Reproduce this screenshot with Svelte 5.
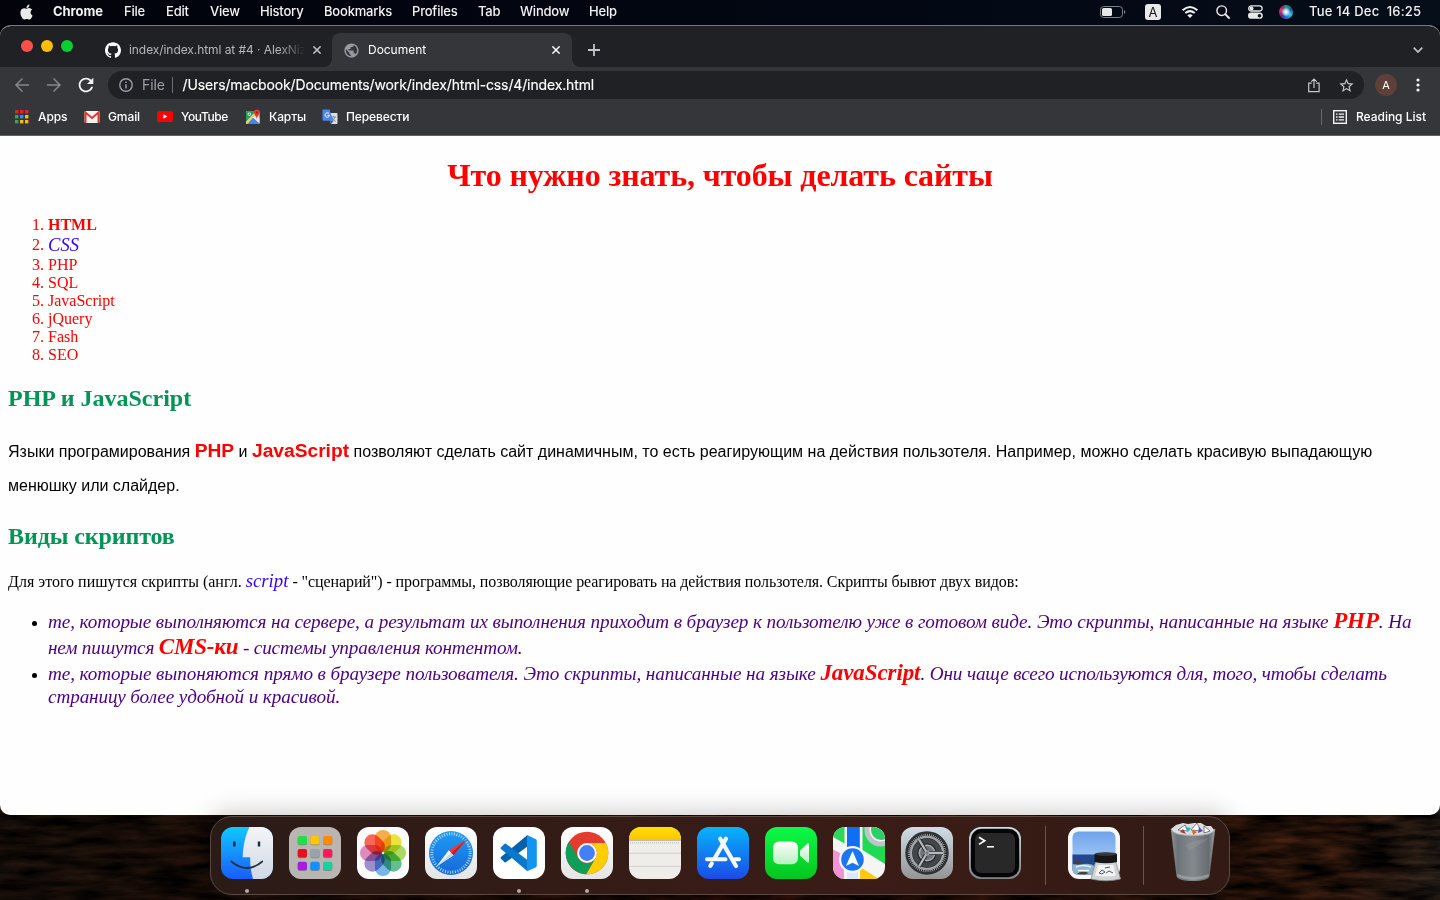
<script>
  const menus = [
    ['File', 42], ['Edit', 44], ['View', 50], ['History', 64], ['Bookmarks', 88],
    ['Profiles', 66], ['Tab', 42], ['Window', 69], ['Help', 40]
  ];
  const pads = [
    ['#20e04a', 8.7, 9], ['#ffc60a', 21.3, 9], ['#ff8a0a', 34, 9],
    ['#e8101c', 8.7, 22], ['#98a4ad', 21.3, 22], ['#fb1a5b', 34, 22],
    ['#a81be0', 8.7, 34.7], ['#1190ff', 21.3, 34.7], ['#1dcf9c', 34, 34.7]
  ];
  const petals = ['#fb9310', '#e6dc00', '#93d02c', '#2fae68', '#4a9fe4', '#7c6cc0', '#d566a8', '#f83420'];
  const dots = ['#f21d1d', '#f21d1d', '#f21d1d', '#34a853', '#4285f4', '#fbbc04', '#34a853', '#fbbc04', '#fbbc04'];
</script>

<div class="desktop">
  <svg class="wallpaper" width="1440" height="900" aria-hidden="true">
    <defs>
      <filter id="grain" x="0" y="0" width="100%" height="100%">
        <feTurbulence type="fractalNoise" baseFrequency="0.02 0.11" numOctaves="6" seed="8" />
        <feColorMatrix values="0 0 0 0 0  0 0 0 0 0  0 0 0 0 0  1.4 0 0 0 -0.1" />
      </filter>
      <linearGradient id="wood"><stop offset="0" stop-color="#2a1a10" /><stop offset=".5" stop-color="#42160b" /><stop offset=".93" stop-color="#4a2412" /><stop offset="1" stop-color="#443429" /></linearGradient>
    </defs>
    <rect y="800" width="1440" height="100" fill="url(#wood)" />
    <rect y="800" width="1440" height="100" filter="url(#grain)" />
  </svg>

  <header class="menubar">
    <svg class="apple" viewBox="0 0 24 24"><path d="M12.152 6.896c-.948 0-2.415-1.078-3.96-1.04-2.04.027-3.91 1.183-4.961 3.014-2.117 3.675-.546 9.103 1.519 12.09 1.013 1.454 2.208 3.09 3.792 3.039 1.52-.065 2.09-.987 3.935-.987 1.831 0 2.35.987 3.96.948 1.637-.026 2.676-1.48 3.676-2.948 1.156-1.688 1.636-3.325 1.662-3.415-.039-.013-3.182-1.221-3.22-4.857-.026-3.04 2.48-4.494 2.597-4.559-1.429-2.09-3.623-2.324-4.39-2.376-2-.156-3.675 1.09-4.61 1.09zM15.53 3.83c.843-1.012 1.4-2.427 1.245-3.83-1.207.052-2.662.805-3.532 1.818-.78.896-1.454 2.338-1.273 3.714 1.338.104 2.715-.688 3.559-1.701" /></svg>
    <b class="appname">Chrome</b>
    {#each menus as [label, w]}<span class="menu" style:width="{w}px">{label}</span>{/each}
    <div class="status">
      <svg width="26" height="12" viewBox="0 0 26 12"><rect x=".5" y=".5" width="22" height="11" rx="3.2" fill="none" stroke="#7d8087" /><rect x="2" y="2" width="10" height="8" rx="1.6" fill="#e8e8e9" /><path d="M24 4v4q1.3-.6 1.3-2T24 4z" fill="#7d8087" /></svg>
      <span class="lang">A</span>
      <svg class="wifi" width="18" height="14" viewBox="0 0 18 14" fill="none" stroke="#f0f0f0" stroke-width="2"><path d="M1.6 5.3q7.4-6.6 14.8 0M4.3 8.1q4.7-4 9.4 0" /><path d="M6.3 10.2q2.7-2 5.4 0L9 13z" fill="#f0f0f0" stroke="none" /></svg>
      <svg width="14" height="14" viewBox="0 0 14 14" fill="none" stroke="#ededed" stroke-width="1.4"><circle cx="5.7" cy="5.7" r="4.8" /><path d="M9.2 9.2 13 13" stroke-width="1.8" stroke-linecap="round" /></svg>
      <svg width="15" height="14" viewBox="0 0 15 14"><rect x=".7" y=".9" width="13.4" height="5.1" rx="2.55" fill="none" stroke="#e8e8e8" stroke-width="1.3" /><circle cx="3.6" cy="3.45" r="1.9" fill="#e8e8e8" /><rect y="7.6" width="14.8" height="6.2" rx="3.1" fill="#e8e8e8" /><circle cx="11.5" cy="10.7" r="1.8" fill="#07101a" /></svg>
      <span class="siri"></span>
      <span class="clock">Tue 14 Dec&nbsp; 16:25</span>
    </div>
  </header>

  <div class="window">
    <div class="tabstrip">
      <div class="lights"><i class="r"></i><i class="y"></i><i class="g"></i></div>
      <div class="tab">
        <svg width="16" height="16" viewBox="0 0 24 24" fill="#fff"><path d="M12 .297c-6.63 0-12 5.373-12 12 0 5.303 3.438 9.8 8.205 11.385.6.113.82-.258.82-.577 0-.285-.01-1.04-.015-2.04-3.338.724-4.042-1.61-4.042-1.61C4.422 18.07 3.633 17.7 3.633 17.7c-1.087-.744.084-.729.084-.729 1.205.084 1.838 1.236 1.838 1.236 1.07 1.835 2.809 1.305 3.495.998.108-.776.417-1.305.76-1.605-2.665-.3-5.466-1.332-5.466-5.93 0-1.31.465-2.38 1.235-3.22-.135-.303-.54-1.523.105-3.176 0 0 1.005-.322 3.3 1.23.96-.267 1.98-.399 3-.405 1.02.006 2.04.138 3 .405 2.28-1.552 3.285-1.23 3.285-1.23.645 1.653.24 2.873.12 3.176.765.84 1.23 1.91 1.23 3.22 0 4.61-2.805 5.625-5.475 5.92.42.36.81 1.096.81 2.22 0 1.606-.015 2.896-.015 3.286 0 .315.21.69.825.57C20.565 22.092 24 17.592 24 12.297c0-6.627-5.373-12-12-12" /></svg>
        <span class="title faded">index/index.html at #4 · AlexNiz</span>
        <svg class="close" width="8" height="8" viewBox="0 0 8 8"><path d="M.4.4l7.2 7.2M7.6.4L.4 7.6" /></svg>
      </div>
      <div class="tab active">
        <svg width="17" height="17" viewBox="0 0 24 24" fill="#969ba1"><path d="M12 2C6.48 2 2 6.48 2 12s4.48 10 10 10 10-4.48 10-10S17.52 2 12 2zm-1 17.93c-3.95-.49-7-3.85-7-7.93 0-.62.08-1.21.21-1.79L9 15v1c0 1.1.9 2 2 2v1.93zm6.9-2.54c-.26-.81-1-1.39-1.9-1.39h-1v-3c0-.55-.45-1-1-1H8v-2h2c.55 0 1-.45 1-1V7h2c1.1 0 2-.9 2-2v-.41c2.93 1.19 5 4.06 5 7.41 0 2.08-.8 3.97-2.1 5.39z" /></svg>
        <span class="title">Document</span>
        <svg class="close" width="8" height="8" viewBox="0 0 8 8"><path d="M.4.4l7.2 7.2M7.6.4L.4 7.6" /></svg>
      </div>
      <svg class="plus" width="12" height="12" viewBox="0 0 12 12"><path d="M6 0v12M0 6h12" stroke="#c3c6ca" stroke-width="1.8" /></svg>
      <svg class="chev" width="10" height="6" viewBox="0 0 10 6"><path d="M.7.7 5 5 9.3.7" fill="none" stroke="#c3c6ca" stroke-width="1.7" /></svg>
    </div>

    <div class="toolbar">
      <svg width="20" height="20" viewBox="0 0 24 24" fill="#85878b"><path d="M20.5 11.1H6.9l6.3-6.2L12 3.6 3.5 12l8.5 8.4 1.2-1.3-6.3-6.2h13.6z" /></svg>
      <svg width="20" height="20" viewBox="0 0 24 24" fill="#85878b"><path d="M3.5 11.1h13.6l-6.3-6.2L12 3.6l8.5 8.4-8.5 8.4-1.2-1.3 6.3-6.2H3.5z" /></svg>
      <svg width="22" height="22" viewBox="0 0 24 24" fill="#f1f3f4"><path d="M17.65 6.35C16.2 4.9 14.21 4 12 4c-4.42 0-7.99 3.58-7.99 8s3.57 8 7.99 8c3.73 0 6.84-2.55 7.73-6h-2.08c-.82 2.33-3.04 4-5.65 4-3.31 0-6-2.69-6-6s2.69-6 6-6c1.66 0 3.14.69 4.22 1.78L13 11h7V4l-2.35 2.35z" /></svg>
      <div class="omnibox">
        <svg width="14" height="14" viewBox="0 0 14 14"><circle cx="7" cy="7" r="6.2" fill="none" stroke="#9aa0a6" stroke-width="1.4" /><path d="M7 6.2v4.3M7 3.5v1.5" stroke="#9aa0a6" stroke-width="1.5" /></svg>
        <span class="scheme">File</span><i class="bar"></i>
        <span class="url">/Users/macbook/Documents/work/index/html-css/4/index.html</span>
        <svg class="share" width="12" height="15" viewBox="0 0 12 15" fill="none" stroke="#c4c7ca" stroke-width="1.2"><path d="M3.7 5.2H.7v8.5h10.4V5.2H8.2M6 10V1.2M3.3 3.7 6 1l2.7 2.7" /></svg>
        <svg class="star" width="17" height="17" viewBox="0 0 24 24" fill="#c4c7ca"><path d="M22 9.24l-7.19-.62L12 2 9.19 8.63 2 9.24l5.46 4.73L5.82 21 12 17.27 18.18 21l-1.63-7.03L22 9.24zM12 15.4l-3.76 2.27 1-4.28-3.32-2.88 4.38-.38L12 6.1l1.71 4.04 4.38.38-3.32 2.88 1 4.28L12 15.4z" /></svg>
      </div>
      <span class="avatar">A</span>
      <svg class="kebab" width="4" height="14" viewBox="0 0 4 14" fill="#f1f3f4"><circle cx="2" cy="2" r="1.6" /><circle cx="2" cy="7" r="1.6" /><circle cx="2" cy="12" r="1.6" /></svg>
    </div>

    <div class="bookmarks">
      <div class="bm" style:width="69px">
        <svg width="14" height="14" viewBox="0 0 14 14">{#each dots as c, i}<rect x={(i % 3) * 5} y={Math.floor(i / 3) * 5} width="3.4" height="3.4" fill={c} />{/each}</svg><span>Apps</span>
      </div>
      <div class="bm" style:width="73px">
        <svg width="16" height="12" viewBox="0 0 16 12"><rect x=".5" width="15" height="12" rx="1.2" fill="#f2f2f2" /><path d="M1.5 12V1.5L8 7l6.5-5.5V12" fill="none" stroke="#e0392d" stroke-width="2" /></svg><span>Gmail</span>
      </div>
      <div class="bm" style:width="89px">
        <svg width="16" height="11" viewBox="0 0 16 11"><rect width="16" height="11" rx="2.6" fill="#f00" /><path d="M6.4 3.2v4.6l4-2.3z" fill="#fff" /></svg><span>YouTube</span>
      </div>
      <div class="bm" style:width="76px">
        <svg width="16" height="16" viewBox="0 0 16 16"><rect x="1" y="2" width="13.5" height="13" rx="1.3" fill="#e4e7ea" /><path d="M1 3q0-1 1-1h9L1 13z" fill="#269f58" /><path d="M2 15 8 8.5l6.5 5.7q-.3.8-1.3.8z" fill="#4284f3" /><path d="M1 13.2 11.5 2H14L2 15z" fill="#ffd33e" /><path d="M8 8.5l6.5 5.7V9L11 6z" fill="#e4e7ea" /><circle cx="4.3" cy="5.2" r="1.3" fill="none" stroke="#fff" stroke-width=".8" /><path d="M11.8 10C11.5 7 8.9 6.3 8.9 3.6a2.95 3.1 0 0 1 5.9 0C14.8 6.3 12.1 7 11.8 10z" fill="#e53a30" /><circle cx="11.8" cy="3.6" r="1" fill="#811f18" /></svg><span>Карты</span>
      </div>
      <div class="bm">
        <svg width="16" height="16" viewBox="0 0 16 16"><path d="M6 4h8.5q1 0 1 1v9q0 1-1 1H9z" fill="#dcdfe2" /><path d="M8.5 8h5.5M11.2 7v1M13 8q-1 3-3.5 4.5M10 9q1.2 2.5 3.7 3.5" fill="none" stroke="#6f8494" stroke-width=".9" /><path d="M1.5.5h6l3.8 11.3H1.5q-1 0-1-1V1.5q0-1 1-1z" fill="#4b86ec" /><path d="M7 4.6A2.2 2.2 0 1 0 7.5 6.3H5.5" fill="none" stroke="#fff" stroke-width="1" /><path d="M8 11.8h3.3L9.5 15z" fill="#2d5bb0" /></svg><span>Перевести</span>
      </div>
      <div class="reading">
        <svg width="14" height="14" viewBox="0 0 14 14" fill="none" stroke="#f1f3f4"><rect x=".7" y=".7" width="12.6" height="12.6" stroke-width="1.4" /><path d="M3 4.2h1.5M3 7h1.5M3 9.8h1.5M5.7 4.2H11M5.7 7H11M5.7 9.8H11" stroke-width="1.3" /></svg><span>Reading List</span>
      </div>
    </div>

    <main class="page">
      <h1>Что нужно знать, чтобы делать сайты</h1>
      <ol>
        <li><b>HTML</b></li>
        <li class="tall"><em>CSS</em></li>
        <li>PHP</li><li>SQL</li><li>JavaScript</li><li>jQuery</li><li>Fash</li><li>SEO</li>
      </ol>
      <h2>PHP и JavaScript</h2>
      <p class="sans">Языки програмирования <b>PHP</b> и <b>JavaScript</b> позволяют сделать сайт динамичным, то есть реагирующим на действия пользотеля. Например, можно сделать красивую выпадающую<br />менюшку или слайдер.</p>
      <h2 class="second">Виды скриптов</h2>
      <p class="serif">Для этого пишутся скрипты (англ. <em>script</em> <span class="rest">- "сценарий") - программы, позволяющие реагировать на действия пользотеля. Скрипты бывют двух видов:</span></p>
      <ul>
        <li><span class="ln l1">те, которые выполняются на сервере, а результат их выполнения приходит в браузер к пользотелю уже в готовом виде. Это скрипты, написанные на языке <b>PHP</b>. На</span><span class="ln l2">нем пишутся <b>CMS-ки</b> - системы управления контентом.</span></li>
        <li><span class="ln l3">те, которые выпоняются прямо в браузере пользователя. Это скрипты, написанные на языке <b>JavaScript</b><span class="tail">. Они чаще всего используются для, того, чтобы сделать</span></span><span class="ln l4">страницу более удобной и красивой.</span></li>
      </ul>
    </main>
  </div>

  <nav class="dock">
    <svg class="defs" width="0" height="0" aria-hidden="true"><defs>
      <linearGradient id="gBlue" x2="0" y2="1"><stop stop-color="#10c8ff" /><stop offset="1" stop-color="#1a5cff" /></linearGradient>
      <linearGradient id="gPale" x2="0" y2="1"><stop stop-color="#f4f5f8" /><stop offset="1" stop-color="#cfd8e6" /></linearGradient>
      <linearGradient id="gWhite" x2="0" y2="1"><stop stop-color="#fff" /><stop offset="1" stop-color="#e4e4e4" /></linearGradient>
      <linearGradient id="gSafari" x2="0" y2="1"><stop stop-color="#1f9df5" /><stop offset="1" stop-color="#1568d8" /></linearGradient>
      <linearGradient id="gStore" x2="0" y2="1"><stop stop-color="#08b4fb" /><stop offset="1" stop-color="#1a4ce6" /></linearGradient>
      <linearGradient id="gGreen" x2="0" y2="1"><stop stop-color="#0bfa4a" /><stop offset="1" stop-color="#05c61c" /></linearGradient>
      <linearGradient id="gCam" x2="0" y2="1"><stop stop-color="#fff" /><stop offset="1" stop-color="#b8efc0" /></linearGradient>
      <linearGradient id="gGear" x2="0" y2="1"><stop stop-color="#cfdde6" /><stop offset="1" stop-color="#949494" /></linearGradient>
      <linearGradient id="gTerm" x2="0" y2="1"><stop stop-color="#cfe0e8" /><stop offset="1" stop-color="#7e868a" /></linearGradient>
      <linearGradient id="gYellow" x2="0" y2="1"><stop stop-color="#ffe000" /><stop offset="1" stop-color="#ffc400" /></linearGradient>
      <linearGradient id="gSky" x2="0" y2="1"><stop stop-color="#6ea3ea" /><stop offset="1" stop-color="#bcd9fb" /></linearGradient>
      <linearGradient id="gBin"><stop stop-color="#8d9396" /><stop offset=".15" stop-color="#6e7578" /><stop offset=".5" stop-color="#84898c" /><stop offset=".85" stop-color="#666c6f" /><stop offset="1" stop-color="#999fa1" /></linearGradient>
      <clipPath id="sq"><rect width="52" height="52" rx="12" /></clipPath>
    </defs></svg>

    <div class="app running"><svg viewBox="0 0 52 52"><g clip-path="url(#sq)"><rect width="52" height="52" fill="url(#gBlue)" /><path d="M28.5 0C24 9 22 20 21.7 30.3h7.5C29 38 30 45 32 52h20V0z" fill="url(#gPale)" /></g><path d="M13.3 14.5v5M38 14.5v5" stroke="#1d2b3a" stroke-width="2.4" /><path d="M10.3 34.5Q26 47.5 41.3 34.5" fill="none" stroke="#26313c" stroke-width="1.7" stroke-linecap="round" /></svg></div>
    <div class="app"><svg viewBox="0 0 52 52"><rect width="52" height="52" rx="12" fill="#b9b5b2" />{#each pads as [c, x, y]}<rect {x} y={y + .6} width="9.3" height="8.7" rx="2" fill="#000" opacity=".25" /><rect {x} {y} width="9.3" height="8.5" rx="2" fill={c} />{/each}</svg></div>
    <div class="app"><svg viewBox="0 0 52 52"><rect width="52" height="52" rx="12" fill="#fcfcfc" /><g class="petals">{#each petals as c, i}<rect x="17.9" y="3" width="16.2" height="22.4" rx="8.1" fill={c} transform="rotate({i * 45} 26 26)" />{/each}</g><circle cx="26" cy="26" r="1" fill="#fff" /></svg></div>
    <div class="app"><svg viewBox="0 0 52 52"><rect width="52" height="52" rx="12" fill="url(#gWhite)" /><circle cx="26" cy="26" r="22" fill="url(#gSafari)" /><circle cx="26" cy="26" r="19.2" fill="none" stroke="#d5ebff" stroke-width="3" stroke-dasharray=".8 1.713" /><path d="M41.5 12.5 23.7 23.3l4.8 5z" fill="#f03a35" /><path d="M11.5 39.5 23.7 23.3l4.8 5z" fill="#f1f3f5" /><path d="M41.5 12.5 26 26l2.5 2.3z" fill="#c81f24" /><path d="M11.5 39.5 26 26l2.5 2.3z" fill="#cdd5dc" /></svg></div>
    <div class="app running"><svg viewBox="0 0 52 52"><rect width="52" height="52" rx="12" fill="#fff" /><path d="M34.4 8V19.5L12.8 35.3q-.6.4-1.2 0L8 31.8q-.8-1 0-1.7z" fill="#0062ae" /><path d="M34.4 44.3V33L12.8 16.7q-.6-.4-1.2 0L8 20.2q-.8 1 0 1.7z" fill="#0a78cc" /><path d="M34 8 42.5 12q1.3.6 1.3 2v24.4q0 1.4-1.3 2L34 44.3z" fill="#1294f0" /></svg></div>
    <div class="app running"><svg viewBox="0 0 52 52"><rect width="52" height="52" rx="12" fill="url(#gWhite)" /><g transform="translate(26 26)"><circle r="21.3" fill="#e33b2e" /><path d="M-18.07-11.28-8.66 5A10 10 0 0 0 8.66 5L-.74 21.28A21.3 21.3 0 0 1-18.07-11.28z" fill="#0f9d58" /><path d="M18.8-10H0A10 10 0 0 1 8.66 5L-.74 21.28A21.3 21.3 0 0 0 18.8-10z" fill="#ffcd00" /><circle r="9.9" fill="#fff" /><circle r="7.9" fill="#4480f5" /></g></svg></div>
    <div class="app"><svg viewBox="0 0 52 52"><g clip-path="url(#sq)"><rect width="52" height="52" fill="#efede9" /><rect width="52" height="12.8" fill="url(#gYellow)" /><path d="M0 13.2h52" stroke="#a9a39a" /><path d="M1 15.8h50" stroke="#b9b5ae" stroke-dasharray="1 1" /><path d="M0 26.2h52M0 39.3h52" stroke="#cac7c2" stroke-width=".8" /></g></svg></div>
    <div class="app"><svg viewBox="0 0 52 52"><rect width="52" height="52" rx="12" fill="url(#gStore)" /><g fill="none" stroke="#f4faff" stroke-width="4.2" stroke-linecap="round"><path d="M29 11.8 18 30.8" /><path d="M10 32.3h18.5M38 32.3h4" stroke-width="4" /><path d="M23.2 11.8 39 39" /><path d="M14.8 36.5 13.3 39" /></g></svg></div>
    <div class="app"><svg viewBox="0 0 52 52"><rect width="52" height="52" rx="12" fill="url(#gGreen)" /><rect x="8" y="14.5" width="25" height="22.8" rx="6" fill="url(#gCam)" /><path d="M35 23.5 42.3 16.7q1.7-1 1.7 1v16.6q0 2-1.7 1L35 28.8z" fill="url(#gCam)" /></svg></div>
    <div class="app"><svg viewBox="0 0 52 52"><g clip-path="url(#sq)"><rect width="52" height="52" fill="#f5f5f3" /><path d="M0 10 11.5 16.5V0H0z" fill="#2fd65a" /><path d="M29.5 0H52v37L29.5 23z" fill="#20d955" /><circle cx="48" cy="3" r="14" fill="#f5f5f3" stroke="#c0c3cc" stroke-width="5" /><circle cx="48" cy="3" r="10" fill="#2bcf68" /><path d="M0 22.5 11 28v24H0z" fill="#f193d4" /><path d="M27 52V40L46 52z" fill="#ffcb08" /><path d="M14 43h11v9H14z" fill="#dbe8fb" /><path d="M14 0h12.8v24H14z" fill="#106ef5" /></g><circle cx="19.5" cy="32.5" r="13.5" fill="#f5f7fa" /><circle cx="19.5" cy="32.5" r="11.3" fill="#1a76f5" /><path d="M19.5 24 26 39l-6.5-3.2L13 39z" fill="#fff" /></svg></div>
    <div class="app"><svg viewBox="0 0 52 52"><rect width="52" height="52" rx="12" fill="url(#gGear)" /><g fill="none"><circle cx="26" cy="26" r="20.5" fill="#a0a5a8" stroke="#303436" stroke-width="2.4" /><circle cx="26" cy="26" r="18.6" stroke="#202324" stroke-width="2.6" stroke-dasharray="1.05 .91" /><circle cx="26" cy="26" r="15.3" fill="#43474a" stroke="#303335" stroke-width="2" /><circle cx="26" cy="26" r="15.8" stroke="#a0a6a9" stroke-width="1.8" /><circle cx="26" cy="26" r="9" fill="#6f7578" stroke="#25282a" stroke-width="1.5" /><circle cx="26" cy="26" r="7.7" stroke="#a4aaad" stroke-width="1.5" /><path d="M26 26h16M26 26 18 12.5M26 26l-8 13.5" stroke="#25282a" stroke-width="4" /><path d="M26 26h16M26 26 18 12.5M26 26l-8 13.5" stroke="#b4b9bc" stroke-width="2.3" /><circle cx="26" cy="26" r="2.2" fill="#777d80" stroke="#b0b5b8" /></g></svg></div>
    <div class="app"><svg viewBox="0 0 52 52"><rect width="52" height="52" rx="12" fill="url(#gTerm)" /><rect x="1.8" y="1.8" width="48.4" height="48.4" rx="10.5" fill="#050505" /><rect x="6" y="6" width="40" height="40" rx="6" fill="#282828" /><path d="M10 10.2 15.7 13.8 10 17.4" fill="none" stroke="#fff" stroke-width="1.7" /><path d="M18 19.8h7" stroke="#fff" stroke-width="1.5" /></svg></div>
    <i class="sep"></i>
    <div class="app"><svg viewBox="0 0 52 52" overflow="visible"><rect width="52" height="52" rx="11" fill="#f7f7f7" /><rect x="4.5" y="4.5" width="43" height="43" rx="6" fill="url(#gSky)" /><path d="M4.5 27.5h43V42q0 5.5-6 5.5h-31q-6 0-6-5.5z" fill="#23468c" /><path d="M4.5 37q6 1 12 0t12 3v7.5h-18q-6 0-6-5.5z" fill="#8fb5cf" /><path d="M5 35.5q5-3 10 1l-5 1zM9 47q4-4 12-1l-4 1.5z" fill="#4b3d30" /><path d="M8 40q6-3 15 0M10 43.5h11" stroke="#edf6fa" stroke-width="1.5" fill="none" /><path d="M27.5 35h20.5l4.5 17q-14 3.5-29.5 0z" fill="#cfd4d5" stroke="#8c9192" stroke-width=".8" /><path d="M30 38h15.5l2 10.5q-9 2-20.5 0z" fill="#f4f4f2" /><path d="M31 46l3-3 3 2-3 2zM37 41l5-1M38 46l3-2 4 2" stroke="#48556b" stroke-width="1" fill="none" /><path d="M26.5 27q11-2.5 22.5 0v8q-11 2.5-22.5 0z" fill="#161616" /><ellipse cx="37.8" cy="27" rx="11" ry="1.7" fill="#3b3b3b" /></svg></div>
    <i class="sep two"></i>
    <div class="bin"><svg width="46" height="60" viewBox="0 0 46 60"><path d="M1 7 6 3l7-2 5 1 6-1 7 0 5 3 5 0 4 5-5 6H4z" fill="#dcdedd" /><path d="M8 8l7-5 3 6zM21 8l6-7 4 8zM34 4l6 5-6 2z" fill="#fff" stroke="#454b4e" stroke-width=".7" /><path d="M15 5l6 1-3 4z" fill="#25b6bf" /><path d="M22 8l5 2-4 3z" fill="#e1602b" /><path d="M29 5l4 4-5 2z" fill="#5a4bb0" /><path d="M10 10l3-3 3 5z" fill="#b13735" /><path d="M.8 7Q3 13.5 23 13.5T45.2 7L39.5 54q-1 5-16.5 5T6.5 54z" fill="url(#gBin)" /><path d="M1 7Q3 13.5 23 13.5T45 7" fill="none" stroke="#a9afb1" /><path d="M7 52q16 6 32 0l-.5 3q-15 6-31 0z" fill="#aab0b2" opacity=".6" /><path d="M15 23Q29 16 38 17q-10 7-19 12z" fill="#a5abad" opacity=".25" /></svg></div>
  </nav>
</div>

<style>
  :global(body) { background: #000; overflow: hidden; }
  .desktop { position: relative; width: 1440px; height: 900px; overflow: hidden; background: #000; font-family: Inter, "Noto Sans", sans-serif; }
  svg { display: block; flex: none; }
  .wallpaper { position: absolute; inset: 0; }
  .menubar { position: relative; height: 25px; box-sizing: border-box; padding: 0 19px 2px 19px; display: flex; align-items: center; background: linear-gradient(90deg, #02030b, #020713 60%, #050e19); color: #f2f2f3; font-size: 13px; line-height: 14px; font-weight: 500; letter-spacing: -.2px; white-space: nowrap; }
  .apple { width: 15px; height: 16px; margin-right: 19px; fill: #e9e9ea; }
  .appname { width: 71px; padding-bottom: 2px; font-weight: 700; letter-spacing: -.05px; }
  .menu { flex: none; padding-bottom: 2px; }
  .status { margin-left: auto; display: grid; grid-template-columns: 45px 37px 34px 32px 31px 30px 112px; align-items: center; }
  .status .wifi { margin-left: -1px; }
  .lang { width: 16px; height: 16px; border-radius: 3px; background: #e9e9e9; color: #161616; text-align: center; line-height: 16px; font-weight: 400; }
  .siri { width: 14px; height: 14px; border-radius: 50%; background: radial-gradient(circle, #fff 5%, #a8dcfb 22%, transparent 48%), conic-gradient(#1ba879, #155d91, #29c5ee 120deg, #2967cf 180deg, #5b2a83 230deg, #ef2e70 290deg, #843366 330deg, #1ba879); }
  .clock { letter-spacing: .2px; padding-bottom: 2px; }
  .window { position: relative; height: 790px; box-sizing: border-box; border-radius: 11px 11px 10px 10px; border-top: 1px solid #77787a; overflow: hidden; background: #fefefe; }
  .tabstrip { height: 41px; background: #202124; display: flex; box-sizing: border-box; }
  .lights { display: flex; gap: 8px; padding: 14px 0 0 21px; width: 71px; }
  .lights i { width: 12px; height: 12px; border-radius: 50%; }
  .r { background: #ff5148; } .y { background: #ffbd05; } .g { background: #09cf31; }
  .tab { position: relative; height: 34px; margin-top: 7px; width: 240px; display: flex; align-items: center; box-sizing: border-box; padding: 0 11px 0 13px; font-size: 12px; color: #b4b7bb; }
  .tab .title { margin-left: 8px; white-space: nowrap; line-height: 16px; }
  .tab.active .title { letter-spacing: -.03px; }
  .faded { width: 180px; letter-spacing: -.07px; -webkit-mask-image: linear-gradient(90deg, #000 150px, transparent 176px); mask-image: linear-gradient(90deg, #000 150px, transparent 176px); }
  .tab .close { margin-left: auto; stroke: #c3c6ca; stroke-width: 1.5; }
  .tab.active { background: #35363a; border-radius: 8px 8px 0 0; color: #fff; padding-right: 12px; padding-left: 11px; }
  .tab.active .close { stroke: #fff; }
  .tab.active::before, .tab.active::after { content: ""; position: absolute; bottom: 0; width: 8px; height: 8px; }
  .tab.active::before { left: -8px; background: radial-gradient(circle at 0 0, transparent 7.5px, #35363a 8px); }
  .tab.active::after { right: -8px; background: radial-gradient(circle at 100% 0, transparent 7.5px, #35363a 8px); }
  .plus { margin: 18px 0 0 16px; }
  .chev { margin: 21px 17px 0 auto; }
  .toolbar { height: 36px; background: #35363a; display: flex; align-items: center; padding-left: 12px; gap: 12px; }
  .toolbar > svg:nth-child(3) { margin-left: -1px; margin-right: -1px; }
  .omnibox { width: 1256px; box-sizing: border-box; height: 28px; border-radius: 14px; background: #202124; display: flex; align-items: center; padding: 0 9.5px 0 11px; font-size: 14px; line-height: 16px; color: #fff; }
  .scheme { margin-left: 9px; width: 30px; color: #9aa0a6; letter-spacing: -.1px; }
  .bar { width: 1px; height: 16px; background: #6b6e73; margin-right: 9.5px; }
  .url { letter-spacing: -.13px; white-space: nowrap; -webkit-text-stroke: .15px #fff; }
  .share { margin-left: auto; margin-right: 18px; }
  .avatar { width: 22px; height: 22px; line-height: 22px; border-radius: 50%; background: #5d4037; color: #fff; text-align: center; font-size: 11px; margin-left: -1px; }
  .kebab { margin-left: 7.3px; }
  .bookmarks { height: 33px; box-sizing: border-box; border-bottom: 1px solid #606165; background: #35363a; display: flex; align-items: center; padding: 0 14px 5px 15px; font-size: 12px; font-weight: 500; color: #fff; letter-spacing: -.1px; }
  .bm { display: flex; align-items: center; gap: 8px; white-space: nowrap; }
  .bm:first-child { gap: 9px; }
  .bm:nth-child(3) { letter-spacing: -.4px; }
  .bm:nth-child(4) { gap: 7px; }
  .bm:nth-child(4) svg { margin-left: -1px; margin-right: 1px; }
  .reading { margin-left: auto; height: 16px; border-left: 1px solid #66686b; padding-left: 11px; display: flex; align-items: center; gap: 9px; letter-spacing: -.02px; }
  .page { padding: 0 8px; font: 16px/18px "Liberation Serif", "Times New Roman", serif; color: #000; white-space: nowrap; }
  h1 { margin: 21px 0 22px; font-size: 32px; line-height: 37px; text-align: center; color: #f00; letter-spacing: -.12px; }
  ol { margin: 0; padding-left: 40px; color: #f00; }
  .tall { line-height: 22px; }
  .tall em { font-size: 18.6px; line-height: 20px; position: relative; top: 1px; }
  em { color: #30f; }
  h2 { margin: 20px 0; font-size: 24px; line-height: 28px; color: #009456; }
  .sans { margin: 23px 0 0; font: 16px/34px "Liberation Sans", Arial, sans-serif; }
  .sans b { font-size: 19.2px; color: #f00; line-height: 20px; }
  h2.second { margin: 19px 0 20px; letter-spacing: -.1px; }
  .serif { margin: 0; padding-top: 3px; }
  .serif em { font-size: 18.8px; line-height: 16px; }
  .rest { letter-spacing: -.09px; }
  ul { margin: 18px 0 0; padding-left: 40px; }
  ul li { color: #000; }
  .ln { display: block; height: 26px; line-height: 26px; font-size: 19.2px; font-style: italic; color: #4b0082; letter-spacing: -.11px; }
  .ln b { color: #f00; font-size: 23px; line-height: 20px; }
  .l2 { letter-spacing: -.16px; word-spacing: -.1px; }
  .l3 { height: 24px; letter-spacing: -.09px; }
  .tail { letter-spacing: -.145px; }
  .l4 { height: 24px; line-height: 24px; }
  .dock { position: absolute; left: 210px; top: 816px; width: 1020px; height: 79px; box-sizing: border-box; border: 1px solid #5a4841; border-radius: 22px; background: linear-gradient(90deg, #2b1b17, #3b1c16 65%, #311b14); display: flex; gap: 16px; padding: 10px; box-shadow: 0 0 24px 4px rgba(0, 0, 0, .2); }
  .defs { position: absolute; }
  .app { position: relative; width: 52px; height: 52px; flex: none; }
  .petals rect { opacity: .75; mix-blend-mode: multiply; }
  .running::after { content: ""; position: absolute; left: 24px; top: 62px; width: 4px; height: 4px; border-radius: 50%; background: #b4a8a4; }
  .sep { width: 1px; height: 59px; margin: -1px 6px 0 8px; background: #67544d; flex: none; }
  .sep.two { margin: -1px 10px 0 7px; }
  .bin { margin-top: -5px; }
</style>
